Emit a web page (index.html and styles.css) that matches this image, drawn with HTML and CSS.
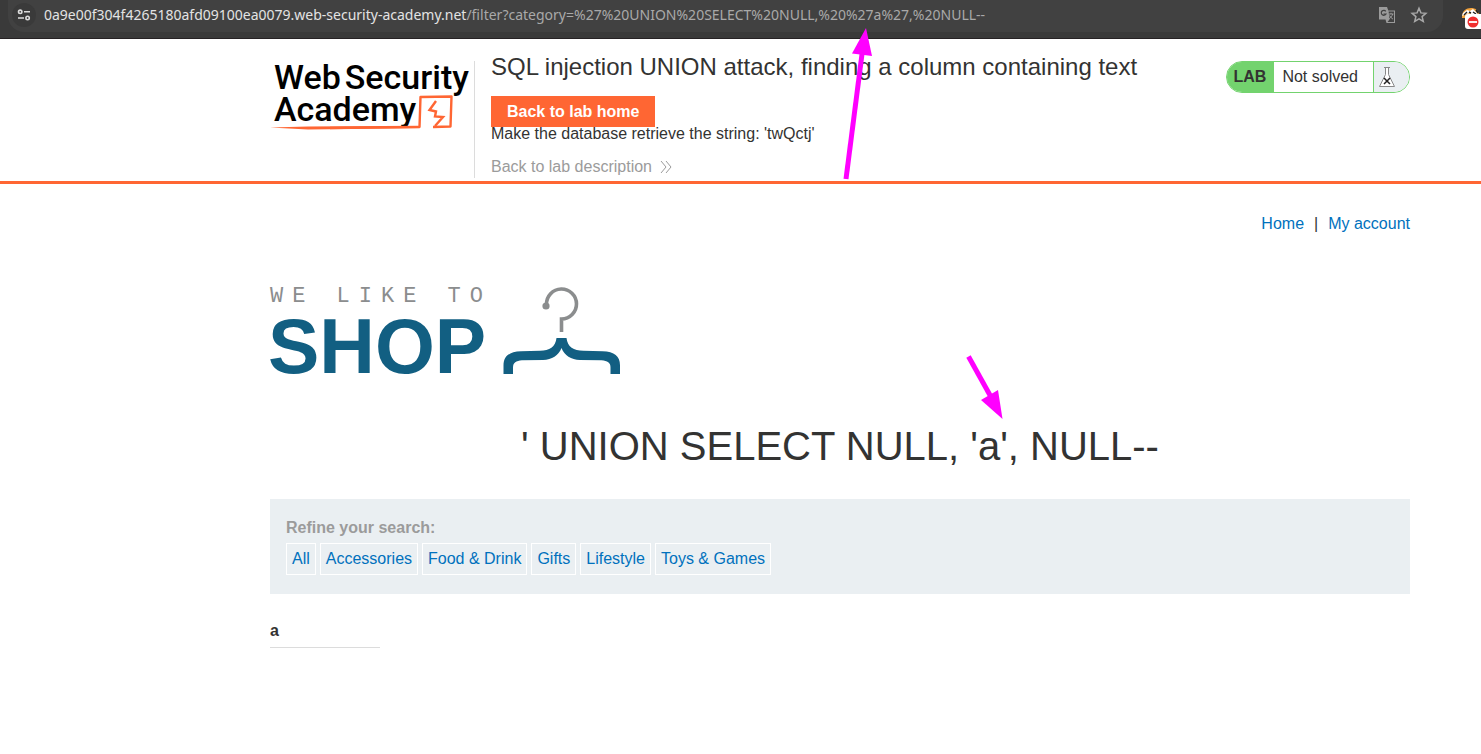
FILE: index.html
```html
<!DOCTYPE html>
<html lang="en">
<head>
<meta charset="utf-8">
<title>SQL injection UNION attack, finding a column containing text</title>
<link rel="stylesheet" href="styles.css">
</head>
<body>
<div class="browser-bar">
  <div class="omnibox">
    <button class="site-info" type="button" aria-label="View site information">
      <svg width="14" height="12" viewBox="0 0 14 12" fill="none" stroke="#dcdcdc" stroke-width="1.6"><circle cx="3.2" cy="2.8" r="1.7"/><path d="M7 2.8h6M1 9h6"/><circle cx="10.6" cy="9" r="1.7"/></svg>
    </button>
    <div class="url"><span class="host">0a9e00f304f4265180afd09100ea0079.web-security-academy.net</span>/filter?category=%27%20UNION%20SELECT%20NULL,%20%27a%27,%20NULL--</div>
    <button class="bar-button" type="button" aria-label="Translate this page">
      <svg width="18" height="18" viewBox="0 0 18 18"><path d="M1 1h8l1.300 3.500H17V17H8.500L7.500 13.500H1z" fill="#9b9b9b"/><path d="M10.600 5.500H16V16H9.500l2-2.500z" fill="#414141"/><path d="M7.800 5.300A2.500 2.500 0 1 0 8 8H5.500" fill="none" stroke="#414141" stroke-width="1.200"/><path d="M10.500 8h5M13 6.800V8M14.700 8c-.5 2-1.700 3.500-3.500 4.700M11.500 9.500c.8 1.500 2 2.600 3.500 3.700" fill="none" stroke="#9b9b9b" stroke-width="1"/></svg>
    </button>
    <button class="bar-button" type="button" aria-label="Bookmark this tab">
      <svg width="18" height="18" viewBox="0 0 18 18"><path d="M9 2.200l1.900 4.700 5 .4-3.800 3.300 1.200 4.900L9 12.900l-4.300 2.600 1.200-4.900L2.100 7.300l5-.4z" fill="none" stroke="#a8a8a8" stroke-width="1.500"/></svg>
    </button>
  </div>
  <button class="extension" type="button" aria-label="Extension">
    <svg width="20" height="22" viewBox="0 0 20 22"><path d="M1 10C1 4 5 1 10 1s6 2 8 6l-2 4H1z" fill="#f3a33c"/><path d="M2 6l4-3 3 1 3-2 3 3 3 3-3-1-3 1-3-2-4 1-4 2z" fill="#fff"/><path d="M3 8l3-3M8 5l2 1M12 5l3 2M15 3l2 3" stroke="#222" stroke-width="1.400"/><rect x="4" y="7" width="18" height="15" rx="3" fill="#fff"/><circle cx="12" cy="15" r="5.500" fill="#f02d2d"/><path d="M8 15h8" stroke="#fff" stroke-width="1.800"/></svg>
  </button>
</div>

<header class="lab-header">
  <div class="lab-inner">
    <a class="academy-logo" href="#" aria-label="Web Security Academy">
      <span class="academy-line"><span>Web</span><span>Security</span></span>
      <span class="academy-line">Academy</span>
      <svg class="academy-mark" width="184" height="38" viewBox="0 0 184 38" fill="none" stroke="#ff6633"><path d="M0 33.500L38 32.500l112-.7V34L38 35.500z" fill="#ff6633" stroke="none"/><path d="M60 34l89.500-1 1-30 31-.5-1 30-17.500.5" stroke-width="2.400" stroke-linejoin="round"/><path d="M166 7L159.500 16l6.500 1.500-1 5 8 .5-8 9" stroke-width="2.400"/></svg>
    </a>
    <div class="lab-title">
      <h2>SQL injection UNION attack, finding a column containing text</h2>
      <a class="lab-home" href="#">Back to lab home</a>
      <p>Make the database retrieve the string: 'twQctj'</p>
      <a class="lab-back" href="#">Back to lab description <svg width="12" height="12" viewBox="0 0 12 12" fill="none" stroke="#9b9b9b"><path d="M1 0l5 6-5 6M6 0l5 6-5 6"/></svg></a>
    </div>
    <div class="lab-status">
      <span class="status-tag">LAB</span>
      <span class="status-text">Not solved</span>
      <span class="status-icon"><svg width="18" height="22" viewBox="0 0 18 22" fill="#fff" stroke="#888"><path d="M6 1.500h6M7.500 1.500v7L1.500 20.500h15l-6-12v-7"/><path d="M6 12l6 6M12 12l-6 6" stroke="#222" stroke-width="1.500"/></svg></span>
    </div>
  </div>
</header>

<main class="page">
  <nav class="account-nav"><a href="#">Home</a><span>|</span><a href="#">My account</a></nav>
  <div class="shop-logo">
    <div class="shop-words"><span class="shop-small">WE LIKE TO</span><span class="shop-big">SHOP</span></div>
    <svg width="118" height="88" viewBox="0 0 118 88" fill="none"><path d="M43.500 17.500A15 15 0 1 1 58.500 32V45" stroke="#8b8d8e" stroke-width="3.600"/><circle cx="43" cy="19" r="3.600" fill="#8b8d8e"/><path d="M53.500 51h10c1 9 7 12.500 17 12.800l19 .4c12 .3 17.500 5 17.500 14V87h-9.500v-6.500c0-5-3-6.800-9-7.300L77 73c-9-.5-15.500-4.500-18.500-12C55.500 68.500 49 72.500 40 73l-21 .2c-6 .5-9 2.300-9 7.300V87H.5v-8.500c0-9 5.500-14 17.500-14.300l19-.4C46.500 63.500 52.500 60 53.500 51z" fill="#125f82"/></svg>
  </div>
  <h1>' UNION SELECT NULL, 'a', NULL--</h1>
  <section class="search-filters">
    <strong>Refine your search:</strong>
    <div class="filter-list">
      <a href="#">All</a><a href="#">Accessories</a><a href="#">Food &amp; Drink</a><a href="#">Gifts</a><a href="#">Lifestyle</a><a href="#">Toys &amp; Games</a>
    </div>
  </section>
  <table class="results"><tbody><tr><th scope="row">a</th></tr></tbody></table>
</main>

<svg class="arrow arrow-url" width="32" height="152" viewBox="0 0 32 152" aria-hidden="true"><path d="M3 151L19 26" stroke="#f0f" stroke-width="5"/><path d="M23 0l6 28-20-2.500z" fill="#f0f"/></svg>
<svg class="arrow arrow-heading" width="38" height="66" viewBox="0 0 38 66" aria-hidden="true"><path d="M2.500 1.500L25 42" stroke="#f0f" stroke-width="5"/><path d="M36.500 64L15 45l17-10z" fill="#f0f"/></svg>
</body>
</html>
```
FILE: styles.css
```css
* { box-sizing: border-box; }
body {
  margin: 0;
  background: #fff;
  color: #333332;
  font: 16px/20px "Liberation Sans", Arial, sans-serif;
  position: relative;
  overflow-x: hidden;
}
h1, h2, p { margin: 0; font-weight: normal; }
a { color: #0071bd; text-decoration: none; }
svg { display: block; flex: none; }
button { border: 0; padding: 0; background: none; }

.browser-bar {
  display: flex;
  align-items: flex-start;
  justify-content: space-between;
  height: 39px;
  padding-left: 8px;
  background: #3a3a3a;
  border-bottom: 1px solid #262224;
  overflow: hidden;
}
.omnibox {
  display: flex;
  align-items: center;
  flex: 1;
  min-width: 0;
  height: 32px;
  margin-right: 18px;
  padding: 0 15px 2px 4px;
  background: #414141;
  border-radius: 0 0 16px 16px;
}
.site-info {
  display: grid;
  place-items: center;
  width: 24px;
  height: 24px;
  margin-right: 8px;
  border-radius: 50%;
  background: #3a3a3a;
}
.url {
  flex: 1;
  color: #a9a9a9;
  font: 14px/20px "Noto Sans", sans-serif;
  white-space: nowrap;
}
.host { color: #e3e3e3; }
.bar-button { margin-left: 14px; }
.extension { padding-top: 7px; }

.lab-header { border-bottom: 3px solid #ff6633; }
.lab-inner {
  display: flex;
  align-items: flex-start;
  padding: 22px 71px 3px 270px;
}
.academy-logo {
  position: relative;
  width: 205px;
  height: 117px;
  padding-left: 4px;
  border-right: 1px solid #dcdcdc;
  color: #000;
  font: 500 34px/32px Roboto, sans-serif;
}
.academy-line { display: flex; gap: 4px; white-space: nowrap; }
.academy-mark { position: absolute; left: 0; top: 33px; }
.lab-title {
  display: flex;
  flex-direction: column;
  align-items: flex-start;
  flex: 1;
  padding-left: 16px;
}
.lab-title h2 { font-size: 24px; line-height: 12px; }
.lab-home {
  margin-top: 23px;
  padding: 6px 16px 5px;
  background: #ff6633;
  color: #fff;
  font-weight: bold;
}
.lab-title p { margin-top: -3px; }
.lab-back {
  display: flex;
  align-items: center;
  gap: 8px;
  margin-top: 13px;
  color: #9b9b9b;
}
.lab-status {
  display: flex;
  height: 32px;
  line-height: 30px;
  border: 1px solid #73d36e;
  border-radius: 16px;
  overflow: hidden;
}
.status-tag { padding: 0 8px 0 7px; background: #73d36e; font-weight: bold; }
.status-text { padding: 0 15px 0 8px; }
.status-icon {
  display: grid;
  place-items: center;
  width: 36px;
  padding-right: 9px;
  background: #eaeff2;
  border-left: 1px solid #73d36e;
}

.page { padding: 30px 71px 0 270px; }
.account-nav { display: flex; justify-content: flex-end; gap: 10px; }
.shop-logo { display: flex; gap: 18px; margin-top: 53px; }
.shop-words { display: flex; flex-direction: column; width: 215px; height: 88px; white-space: nowrap; }
.shop-small {
  color: #8b8d8e;
  font: 22px/19px "Liberation Mono", monospace;
  letter-spacing: 9px;
}
.shop-big {
  margin-left: -2px;
  color: #125f82;
  font-size: 77px;
  font-weight: bold;
  line-height: 81px;
}
.page h1 { margin-top: 47px; font-size: 40px; line-height: 48px; text-align: center; }
.search-filters {
  margin-top: 29px;
  padding: 19px 16px;
  background: #eaeff2;
}
.search-filters strong { display: block; color: #9b9b9b; }
.filter-list { display: flex; flex-wrap: wrap; gap: 4px; margin-top: 5px; }
.filter-list a { padding: 5px; border: 1px solid #fff; }
.results { width: 110px; margin-top: 26px; border-collapse: collapse; }
.results th { padding: 1px 0 6px; border-bottom: 1px solid #dcdcdc; text-align: left; }

.arrow { position: absolute; }
.arrow-url { left: 843px; top: 28px; }
.arrow-heading { left: 966px; top: 355px; }
```
